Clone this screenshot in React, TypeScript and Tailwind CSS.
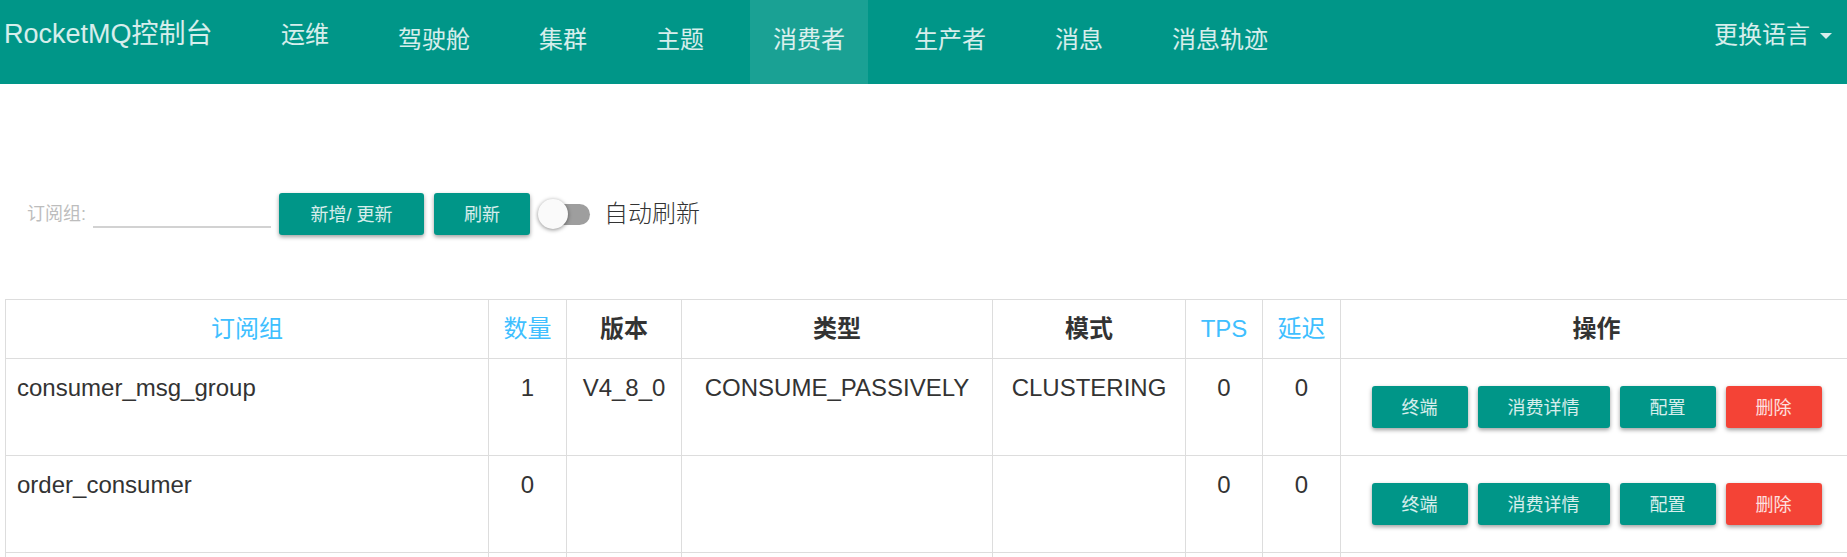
import { useState } from "react";

const links = ["驾驶舱", "集群", "主题", "消费者", "生产者", "消息", "消息轨迹"];

const columns = [
  { title: "订阅组", sortable: true, width: "w-[483px]" },
  { title: "数量", sortable: true, width: "w-[78px]" },
  { title: "版本", sortable: false, width: "w-[115px]" },
  { title: "类型", sortable: false, width: "w-[311px]" },
  { title: "模式", sortable: false, width: "w-[193px]" },
  { title: "TPS", sortable: true, width: "w-[77px]" },
  { title: "延迟", sortable: true, width: "w-[78px]" },
  { title: "操作", sortable: false, width: "" },
];

const rows = [
  ["consumer_msg_group", "1", "V4_8_0", "CONSUME_PASSIVELY", "CLUSTERING", "0", "0"],
  ["order_consumer", "0", "", "", "", "0", "0"],
];

const actions = ["终端", "消费详情", "配置", "删除"];

function RaisedButton({
  label,
  danger = false,
  className = "px-[30px]",
}: {
  label: string;
  danger?: boolean;
  className?: string;
}) {
  return (
    <button
      type="button"
      className={`h-[42px] shrink-0 whitespace-nowrap rounded-[3px] pt-[2px] text-[18px] leading-[40px] text-white/84 shadow-[0_2px_4px_rgba(0,0,0,0.38)] ${
        danger ? "bg-[#f44336]" : "bg-[#009688]"
      } ${className}`}
    >
      {label}
    </button>
  );
}

export default function App() {
  const [active, setActive] = useState("消费者");
  const [auto, setAuto] = useState(false);

  return (
    <div className="overflow-hidden bg-white font-['Liberation_Sans','Noto_Sans_CJK_SC',sans-serif] text-[24px] leading-[34px] text-[#333]">
      <nav className="flex h-[84px] items-start bg-[#009688] text-white/84">
        <a href="#" className="w-[276px] shrink-0 whitespace-nowrap pl-[4px] pt-[17px] text-[27px]">
          RocketMQ控制台
        </a>
        <a href="#ops" className="w-[99px] shrink-0 pl-[5px] pt-[18px]">
          运维
        </a>
        <ul className="flex gap-[23px] self-stretch">
          {links.map((link) => (
            <li key={link} className="flex">
              <a
                href={`#${link}`}
                onClick={() => setActive(link)}
                className={`whitespace-nowrap px-[23px] pt-[23px] ${
                  active === link ? "bg-white/10" : ""
                }`}
              >
                {link}
              </a>
            </li>
          ))}
        </ul>
        <button type="button" className="ml-auto flex items-center gap-[10px] pr-[15px] pt-[18px]">
          更换语言
          <svg className="mt-[2px] h-[6px] w-[12px]" viewBox="0 0 12 6" aria-hidden="true">
            <path d="M0 0h12L6 6z" fill="currentColor" />
          </svg>
        </button>
      </nav>

      <main>
        <form
          className="flex h-[215px] items-center pl-[27px] pt-[45px]"
          onSubmit={(event) => event.preventDefault()}
        >
          <label htmlFor="group" className="w-[66px] shrink-0 text-[18px] text-[#bdbdbd]">
            订阅组:
          </label>
          <input
            id="group"
            type="text"
            className="mr-[8px] h-[28px] w-[178px] border-b-2 border-[#d2d2d2] bg-transparent text-[18px] outline-none"
          />
          <div className="flex items-center gap-[10px]">
            <RaisedButton label="新增/ 更新" className="w-[145px]" />
            <RaisedButton label="刷新" />
          </div>
          <label className="ml-[12px] flex cursor-pointer items-center gap-[14px] font-light">
            <input
              type="checkbox"
              role="switch"
              checked={auto}
              onChange={() => setAuto(!auto)}
              className="peer sr-only"
            />
            <span className="flex h-[21px] w-[48px] items-center rounded-full bg-[#9e9e9e] peer-checked:justify-end peer-checked:bg-[#80cbc4]">
              <span className="-ml-[4px] h-[30px] w-[30px] rounded-full bg-[#fafafa] shadow-[0_1px_4px_rgba(0,0,0,0.45)]" />
            </span>
            自动刷新
          </label>
        </form>

        <div className="-mr-[6px] pl-[5px]">
          <table className="w-full table-fixed border-collapse border border-[#ddd]">
            <thead>
              <tr>
                {columns.map((column) => (
                  <th
                    key={column.title}
                    className={`border border-[#ddd] py-[12px] text-center font-bold ${column.width}`}
                  >
                    {column.sortable ? (
                      <a href="#sort" className="font-normal text-[#40bfff]">
                        {column.title}
                      </a>
                    ) : (
                      column.title
                    )}
                  </th>
                ))}
              </tr>
            </thead>
            <tbody>
              {rows.map((row) => (
                <tr key={row[0]}>
                  {row.map((cell, index) => (
                    <td
                      key={index}
                      className={`border border-[#ddd] py-[12px] align-top ${
                        index === 0 ? "px-[11px] text-left" : "text-center"
                      }`}
                    >
                      {cell}
                    </td>
                  ))}
                  <td className="border border-[#ddd] py-[27px]">
                    <div className="flex justify-center gap-[10px]">
                      {actions.map((action) => (
                        <RaisedButton key={action} label={action} danger={action === "删除"} />
                      ))}
                    </div>
                  </td>
                </tr>
              ))}
              <tr className="h-[5px]">
                {columns.map((column) => (
                  <td key={column.title} className="border-x border-[#ddd]" />
                ))}
              </tr>
            </tbody>
          </table>
        </div>
      </main>
    </div>
  );
}
